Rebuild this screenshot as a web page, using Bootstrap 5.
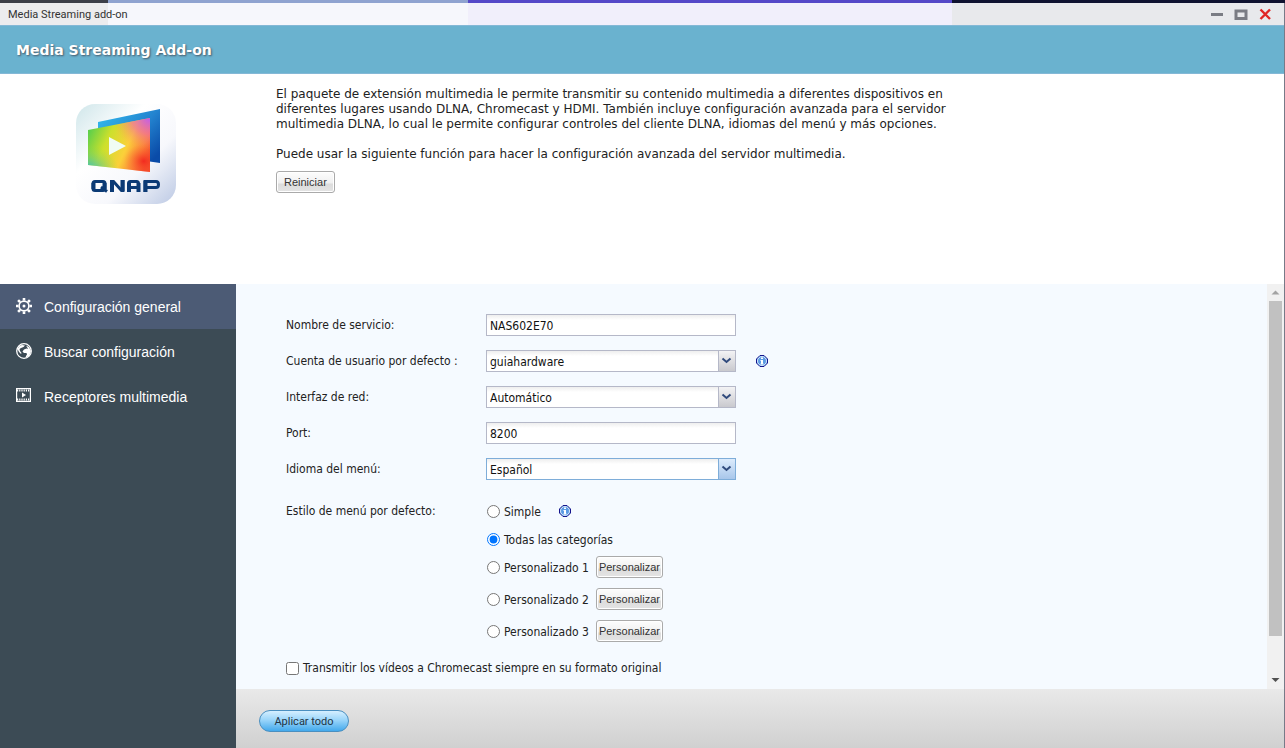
<!DOCTYPE html>
<html lang="es">
<head>
<meta charset="utf-8">
<meta name="viewport" content="width=device-width, initial-scale=1">
<title>Media Streaming add-on</title>
<link href="https://cdn.jsdelivr.net/npm/bootstrap@5.3.0/dist/css/bootstrap.min.css" rel="stylesheet">
<style>
body{font-family:"DejaVu Sans Condensed","DejaVu Sans",sans-serif;font-stretch:condensed;font-size:12px;line-height:16px;color:#222;background:#fff}
.desk-strip{height:3px;background:linear-gradient(90deg,#3c3f48 0 108px,#8fa3d0 108px 468px,#5548c8 468px 952px,#0f1230 952px)}
.window-frame{border-right:1px solid #777a88;min-height:0}
.titlebar{height:22px;padding:1px 12px 0 8px;background:linear-gradient(90deg,#ececee 0 108px,#f6f7fc 108px 468px,#f1effb 468px 952px,#e8e9ec 952px);font:11px/20px Roboto,sans-serif;color:#333}
.win-buttons{gap:10px}
.win-btn{border:0;background:none;padding:0;width:14px;height:14px;display:flex}
.app-header{height:49px;background:#6ab2cf;border-top:1px solid #84b8d6;border-bottom:1px solid #84b8d6}
.app-header h1{font:bold 14px/48px "DejaVu Sans",sans-serif;color:#fff;text-shadow:1px 1px 2px #456}
.intro{height:210px}
.logo-col{width:276px;padding:30px 0 0 76px}
.intro-text{font:12px/15px "DejaVu Sans",sans-serif;max-width:700px;padding-top:13px}
.intro-text p{margin-bottom:15px}
.intro-text p + p{margin-bottom:9px}
.btn-soft{font:11px/14px "Liberation Sans",sans-serif;color:#333;height:22px;padding:0 7px;border:1px solid #aaa;border-radius:3px;background:linear-gradient(#fdfdfd,#f0f0f0 55%,#dcdcdc 60%,#e4e4e4);box-shadow:inset 0 0 0 1px #fff}
.btn-tight{padding:0 2px;margin-left:7px}
.side-menu{width:236px;background:#3c4b55}
.side-menu a{height:45px;padding:0 16px;gap:12px;font:14px/20px "Liberation Sans",sans-serif;color:#fff;text-decoration:none}
.side-menu a.current{background:#4c5b75}
.work-area{min-height:0}
.panel-form{background:#f5faff;padding:30px 50px 0}
.field-row{min-height:22px;margin-bottom:14px}
.field-label{width:200px}
.field{width:250px;height:22px;border:1px solid #b5b8c8;border-radius:0;padding:1px 3px 0;color:#111;outline:0;background:linear-gradient(#eee,#fff 5px)}
select.field{appearance:none;background:url("data:image/svg+xml,%3Csvg xmlns='http://www.w3.org/2000/svg' width='17' height='20'%3E%3ClinearGradient id='g' x2='0' y2='1'%3E%3Cstop stop-color='%23f3f3f5'/%3E%3Cstop offset='1' stop-color='%23c9c9ce'/%3E%3C/linearGradient%3E%3Cpath fill='url(%23g)' d='M0 0h17v20H0z'/%3E%3Cpath fill='%23b5b8c8' d='M0 0h1v20H0z'/%3E%3Cpath fill='none' stroke='%23304a7c' stroke-width='2' d='M4.500 7.500l4 3.500 4-3.500'/%3E%3C/svg%3E") right top no-repeat,linear-gradient(#eee,#fff 5px)}
select.field-active{border-color:#7eadd9;background-image:url("data:image/svg+xml,%3Csvg xmlns='http://www.w3.org/2000/svg' width='17' height='20'%3E%3ClinearGradient id='g' x2='0' y2='1'%3E%3Cstop stop-color='%23dcebfc'/%3E%3Cstop offset='1' stop-color='%23a8c6ea'/%3E%3C/linearGradient%3E%3Cpath fill='url(%23g)' d='M0 0h17v20H0z'/%3E%3Cpath fill='%237eadd9' d='M0 0h1v20H0z'/%3E%3Cpath fill='none' stroke='%23304a7c' stroke-width='2' d='M4.500 7.500l4 3.500 4-3.500'/%3E%3C/svg%3E"),linear-gradient(#eee,#fff 5px)}
.tick{width:13px;height:13px;margin:0}
.style-group{padding-top:6px}
.style-group .field-label{line-height:22px}
.option-list{padding-left:1px}
.option-row{height:22px;margin-bottom:6px}
.option-custom{margin-bottom:10px}
.option-row label{padding-top:1px}
.tick-label{margin-left:4px}
.cast-row{padding-top:8px}
.track{width:17px;background:#f1f1f1}
.thumb{width:13px;background:#c1c1c1;flex:0 0 335px}
.footer-bar{height:59px;padding-left:23px;background:linear-gradient(#e9e9e9,#d0d0d0)}
.btn-apply{width:90px;height:22px;margin-top:5px;border:1px solid #4a8fc0;border-radius:11px;background:linear-gradient(#d5efff,#9ad5fa 45%,#43a9ec);font:11px/14px Roboto,sans-serif;color:#234;padding:1px 0 0}
</style>
</head>
<body class="vh-100 d-flex flex-column overflow-hidden">
<svg width="0" height="0" class="position-absolute" aria-hidden="true">
  <symbol id="info" viewBox="0 0 12 12"><path d="M4 .5h4L11.500 4v4L8 11.500H4L.5 8V4z" fill="#5b9be4" stroke="#14148c"/><circle cx="6" cy="6" r="4.500" fill="none" stroke="#d6e8fb"/><path d="M5 2.500h2v1.500H5zM4.500 5H7v3.500h.5v1h-3v-1H5V6h-.5z" fill="#fff"/></symbol>
</svg>
<div class="desk-strip flex-shrink-0"></div>
<div class="window-frame d-flex flex-column flex-grow-1">
  <div class="titlebar d-flex align-items-center justify-content-between flex-shrink-0">
    <span>Media Streaming add-on</span>
    <div class="win-buttons d-flex">
      <button class="win-btn" type="button" aria-label="Minimizar"><svg width="14" height="14"><path d="M1 5h12v3H1z" fill="#7a7c84"/></svg></button>
      <button class="win-btn" type="button" aria-label="Maximizar"><svg width="14" height="14"><path d="M2 3h10v7.500H2z" fill="none" stroke="#7a7c84" stroke-width="3"/></svg></button>
      <button class="win-btn" type="button" aria-label="Cerrar"><svg width="14" height="14"><path d="M2.500 1.500l9.500 9.500M12 1.500l-9.500 9.500" stroke="#e02626" stroke-width="2.400"/></svg></button>
    </div>
  </div>
  <header class="app-header flex-shrink-0 px-3"><h1 class="m-0">Media Streaming Add-on</h1></header>
  <section class="intro d-flex flex-shrink-0">
    <div class="logo-col flex-shrink-0">
      <svg width="100" height="100" viewBox="0 0 100 100" role="img" aria-label="QNAP">
        <defs>
          <linearGradient id="tile" x1="0" y1="0" x2="1" y2="1"><stop stop-color="#cfe6ea"/><stop offset=".35" stop-color="#fff"/><stop offset=".65" stop-color="#f7f8fc"/><stop offset="1" stop-color="#bcc9e4"/></linearGradient>
          <linearGradient id="back" x2="1" y2=".8"><stop stop-color="#35c0f0"/><stop offset=".6" stop-color="#2383cf"/><stop offset="1" stop-color="#0a4ba8"/></linearGradient>
          <linearGradient id="front" y1=".3" x2="1" y2=".7"><stop stop-color="#5fd04a"/><stop offset=".3" stop-color="#cce02c"/><stop offset=".62" stop-color="#fbd03a"/><stop offset=".85" stop-color="#fb8038"/><stop offset="1" stop-color="#f4412c"/></linearGradient>
          <radialGradient id="pink" cx="1" cy="0" r=".6"><stop stop-color="#c05cf0"/><stop offset=".5" stop-color="#f070a0" stop-opacity=".7"/><stop offset="1" stop-color="#fba050" stop-opacity="0"/></radialGradient>
          <radialGradient id="aqua" cx="0" cy="1" r=".5"><stop stop-color="#25b8e8"/><stop offset="1" stop-color="#80d850" stop-opacity="0"/></radialGradient>
          <radialGradient id="red" cx=".9" cy=".8" r=".32"><stop stop-color="#f22a20"/><stop offset="1" stop-color="#fb8030" stop-opacity="0"/></radialGradient>
        </defs>
        <rect width="100" height="100" rx="19" fill="url(#tile)"/>
        <path d="M22 18L84 5v54L22 50z" fill="url(#back)"/>
        <path d="M12 26l62-12v54L12 61z" fill="url(#front)"/><path d="M12 26l62-12v54L12 61z" fill="url(#pink)"/><path d="M12 26l62-12v54L12 61z" fill="url(#aqua)"/><path d="M12 26l62-12v54L12 61z" fill="url(#red)"/>
        <path d="M33 33l17 9-17 9z" fill="#f0fcf4"/>
        <g fill="none" stroke="#0b3a75" stroke-width="3"><path d="M19 77.500h8q2 0 2 2v5q0 2-2 2h-8q-2 0-2-2v-5q0-2 2-2zM25 83l6 4.500M35.500 88V77.500h2l8 9h1.500V76M52.500 88v-8.500q0-2 2-2h6q2 0 2 2V88M52.500 83.500h10M69 88V77.500h11q2.500 0 2.500 3t-2.500 3H69"/><path stroke-width="4" d="M17.500 79v6M28.500 79v6M36 77v11M46.500 76v11M53 79v9M62.500 79v9M69.500 77v11"/></g>
      </svg>
    </div>
    <div class="intro-text">
      <p>El paquete de extensión multimedia le permite transmitir su contenido multimedia a diferentes dispositivos en diferentes lugares usando DLNA, Chromecast y HDMI. También incluye configuración avanzada para el servidor multimedia DLNA, lo cual le permite configurar controles del cliente DLNA, idiomas del menú y más opciones.</p>
      <p>Puede usar la siguiente función para hacer la configuración avanzada del servidor multimedia.</p>
      <button type="button" class="btn-soft">Reiniciar</button>
    </div>
  </section>
  <div class="work-area d-flex flex-grow-1">
    <nav class="side-menu flex-shrink-0">
      <a href="#" class="current d-flex align-items-center"><svg width="16" height="18" viewBox="-8 -8 16 18"><circle r="4.900" fill="none" stroke="#fff" stroke-width="1.600"/><circle r="1.500" fill="#fff"/><g stroke="#fff" stroke-width="2.600"><path d="M0-8v2.500M0 5.500v2.500M-8 0h2.500M5.500 0h2.500M-5.900-5.900l2 2M3.900 3.900l2 2M-5.900 5.900l2-2M3.900-3.900l2-2"/></g></svg>Configuración general</a>
      <a href="#" class="d-flex align-items-center"><svg width="16" height="18" viewBox="0 0 16 18"><circle cx="8" cy="8" r="7.300" fill="none" stroke="#fff" stroke-width="1.300"/><path d="M1.500 6l2-3L6 2l3 .5L7.500 4 5 5 3.500 6 4 8l1.500 2L5 11 3 9zM10 2.500l3 1.500 2 4-1.500 4.500-4 2.500.5-2 1-1.500-.5-1.500H8L6.500 8.500 8 6.500l2.500-1 1.500.5-1-2z" fill="#fff"/></svg>Buscar configuración</a>
      <a href="#" class="d-flex align-items-center"><svg width="16" height="18" viewBox="0 0 16 18"><path d="M.6.600h13.800v12.800H.6z" fill="none" stroke="#fff" stroke-width="1.200"/><path d="M1 2.500h13M1 11.500h13" stroke="#fff" stroke-width="2" stroke-dasharray="1.200 1"/><path d="M6 4.500L10 7 6 9.500z" fill="#fff"/></svg>Receptores multimedia</a>
    </nav>
    <form class="d-flex flex-column flex-grow-1">
      <div class="d-flex flex-grow-1 overflow-hidden">
        <div class="panel-form flex-grow-1">
          <div class="field-row d-flex align-items-center"><label class="field-label" for="svc">Nombre de servicio:</label><input id="svc" class="field" type="text" value="NAS602E70"></div>
          <div class="field-row d-flex align-items-center"><label class="field-label" for="usr">Cuenta de usuario por defecto :</label><select id="usr" class="field"><option>guiahardware</option></select><svg class="ms-3" width="20" height="12"><use href="#info" x="4" width="12" height="12"/></svg></div>
          <div class="field-row d-flex align-items-center"><label class="field-label" for="net">Interfaz de red:</label><select id="net" class="field"><option>Automático</option></select></div>
          <div class="field-row d-flex align-items-center"><label class="field-label" for="port">Port:</label><input id="port" class="field" type="text" value="8200"></div>
          <div class="field-row d-flex align-items-center"><label class="field-label" for="lang">Idioma del menú:</label><select id="lang" class="field field-active"><option>Español</option></select></div>
          <div class="style-group d-flex" role="radiogroup" aria-labelledby="style-label">
            <span id="style-label" class="field-label">Estilo de menú por defecto:</span>
            <div class="option-list">
              <div class="option-row d-flex align-items-center"><input class="tick" type="radio" name="st" id="s0"><label class="tick-label" for="s0">Simple</label><svg class="ms-3" width="16" height="12"><use href="#info" x="2" width="12" height="12"/></svg></div>
              <div class="option-row d-flex align-items-center"><input class="tick" type="radio" name="st" id="s1" checked><label class="tick-label" for="s1">Todas las categorías</label></div>
              <div class="option-row option-custom d-flex align-items-center"><input class="tick" type="radio" name="st" id="s2"><label class="tick-label" for="s2">Personalizado 1</label><button type="button" class="btn-soft btn-tight">Personalizar</button></div>
              <div class="option-row option-custom d-flex align-items-center"><input class="tick" type="radio" name="st" id="s3"><label class="tick-label" for="s3">Personalizado 2</label><button type="button" class="btn-soft btn-tight">Personalizar</button></div>
              <div class="option-row option-custom d-flex align-items-center"><input class="tick" type="radio" name="st" id="s4"><label class="tick-label" for="s4">Personalizado 3</label><button type="button" class="btn-soft btn-tight">Personalizar</button></div>
            </div>
          </div>
          <div class="cast-row d-flex align-items-center"><input class="tick" type="checkbox" id="cc"><label class="tick-label" for="cc">Transmitir los vídeos a Chromecast siempre en su formato original</label></div>
        </div>
        <div class="track d-flex flex-column align-items-center flex-shrink-0">
          <svg class="flex-shrink-0" width="17" height="17"><path d="M8.500 6.500l4 4h-8z" fill="#a3a3a3"/></svg>
          <div class="thumb"></div>
          <svg class="mt-auto flex-shrink-0" width="17" height="17"><path d="M4.500 6h8l-4 4z" fill="#505050"/></svg>
        </div>
      </div>
      <div class="footer-bar d-flex align-items-center flex-shrink-0"><button type="button" class="btn-apply">Aplicar todo</button></div>
    </form>
  </div>
</div>
<script src="https://cdn.jsdelivr.net/npm/bootstrap@5.3.0/dist/js/bootstrap.bundle.min.js"></script>
</body>
</html>
